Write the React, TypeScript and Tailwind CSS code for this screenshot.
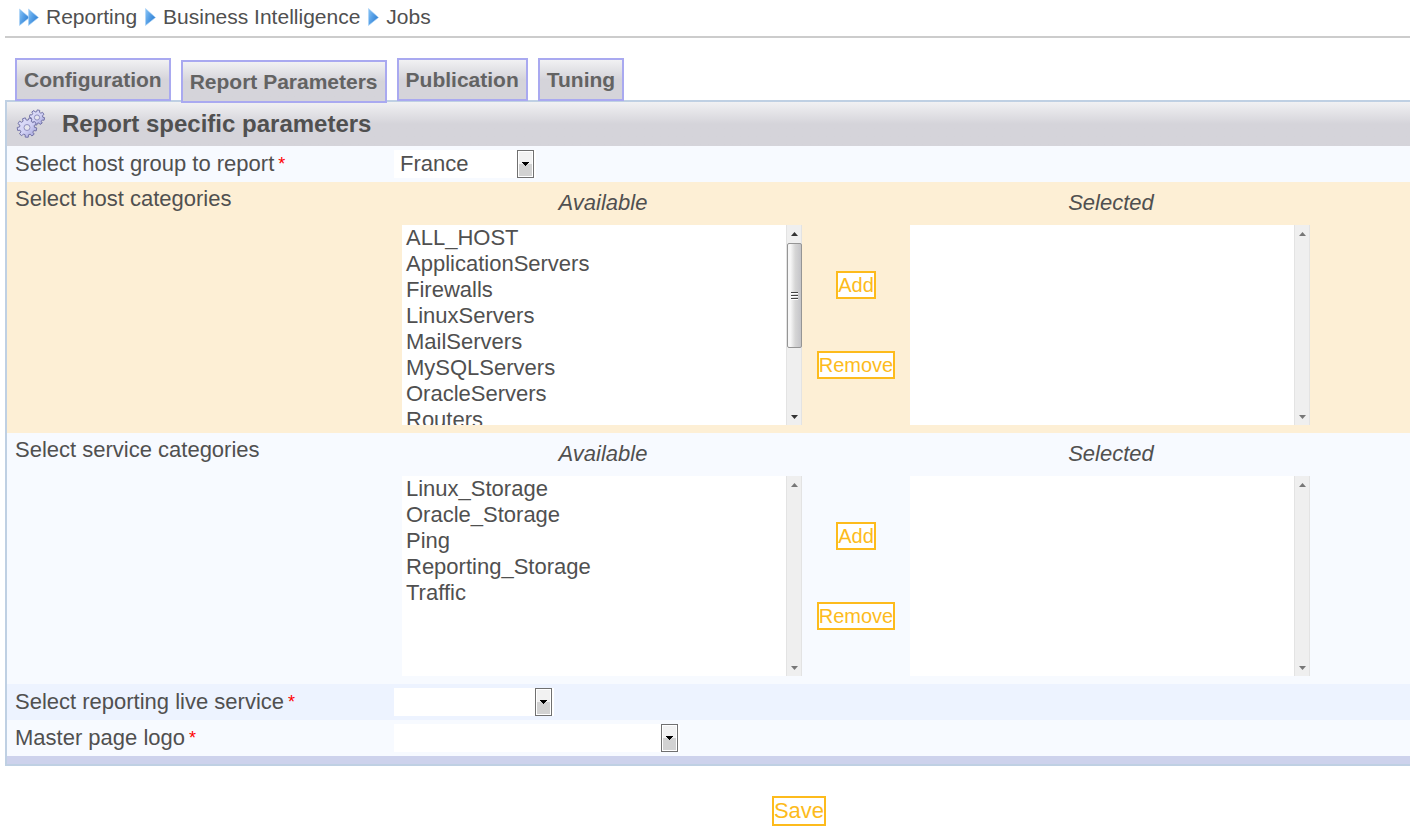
import type { ReactNode } from "react";
import { clsx } from "clsx";

const tabs = ["Configuration", "Report Parameters", "Publication", "Tuning"];
const activeTab = "Report Parameters";

const hostCategories = [
  "ALL_HOST",
  "ApplicationServers",
  "Firewalls",
  "LinuxServers",
  "MailServers",
  "MySQLServers",
  "OracleServers",
  "Routers",
  "Switches",
  "WebServers",
  "WindowsServers"
];

const serviceCategories = [
  "Linux_Storage",
  "Oracle_Storage",
  "Ping",
  "Reporting_Storage",
  "Traffic"
];

// Outline of a cog with flat-topped teeth
function gearPath(cx: number, cy: number, r: number, teeth: number) {
  const points: string[] = [];
  const step = (Math.PI * 2) / teeth;
  for (let i = 0; i < teeth; i++) {
    const a = i * step + 0.2;
    const corners = [
      [-0.32, 0.76],
      [-0.22, 1],
      [0.22, 1],
      [0.32, 0.76]
    ];
    for (const [offset, scale] of corners) {
      const x = cx + Math.cos(a + offset * step) * r * scale;
      const y = cy + Math.sin(a + offset * step) * r * scale;
      points.push(`${x.toFixed(2)} ${y.toFixed(2)}`);
    }
  }
  return `M${points.join("L")}Z`;
}

function GearsIcon() {
  return (
    <svg width="30" height="30" viewBox="0 0 30 30" aria-hidden="true">
      <defs>
        <linearGradient id="gear" x1="0" y1="0" x2="1" y2="1">
          <stop offset="0" stopColor="#e4e4fb" />
          <stop offset="0.55" stopColor="#d0d0f4" />
          <stop offset="1" stopColor="#9a9ad4" />
        </linearGradient>
      </defs>
      <g fill="url(#gear)" stroke="#7474a8" strokeLinejoin="round">
        <path d={gearPath(21, 8.5, 7.6, 8)} />
        <circle cx="21" cy="8.5" r="2.6" fill="#e6e6ee" stroke="#9090c0" />
        <path d={gearPath(11, 18.5, 9.8, 9)} />
        <circle cx="11" cy="18.5" r="3" fill="#e6e6ee" stroke="#9090c0" />
      </g>
    </svg>
  );
}

function Arrow({ double = false }: { double?: boolean }) {
  return (
    <svg
      width={double ? 20 : 12}
      height="18"
      viewBox={double ? "0 0 20 18" : "0 0 12 18"}
      aria-hidden="true"
    >
      <defs>
        <linearGradient id="arrow" x1="0" y1="0" x2="1" y2="0.6">
          <stop offset="0" stopColor="#8cc6f6" />
          <stop offset="0.5" stopColor="#559fe6" />
          <stop offset="1" stopColor="#2f7fd2" />
        </linearGradient>
      </defs>
      <g fill="url(#arrow)" stroke="#a9d2f6" strokeWidth="0.6">
        {double ? (
          <>
            <path d="M0.5 1L10.5 9.5L0.5 17.5Z" />
            <path d="M9.5 1L19.5 9.5L9.5 17.5Z" />
          </>
        ) : (
          <path d="M1.5 0.5L11.5 9.5L1.5 17.5Z" />
        )}
      </g>
    </svg>
  );
}

function Triangle({ up = false, muted = false }) {
  return (
    <svg width="7" height="4" viewBox="0 0 7 4" aria-hidden="true">
      <path
        d={up ? "M0 4L3.5 0L7 4Z" : "M0 0L7 0L3.5 4Z"}
        fill={muted ? "#777777" : "#333333"}
      />
    </svg>
  );
}

function Scrollbar({ thumb }: { thumb: boolean }) {
  return (
    <div
      className="flex w-4 shrink-0 flex-col items-center justify-between border-x border-[#e3e3e3] bg-[#efefef] pt-[7px] pb-1.5"
      aria-hidden="true"
    >
      <div className="flex w-full flex-col items-center gap-[7px]">
        <Triangle up muted={!thumb} />
        {thumb && (
          <div className="flex h-[105px] w-[15px] flex-col items-center justify-center gap-px rounded-xs border border-[#959595] bg-linear-to-r from-[#f6f6f6] from-20% via-[#d6d6d6] via-55% to-[#c4c4c8]">
            <span className="h-0.5 w-[7px] border-t border-[#444444] bg-white" />
            <span className="h-0.5 w-[7px] border-t border-[#444444] bg-white" />
            <span className="h-0.5 w-[7px] border-t border-[#444444] bg-white" />
          </div>
        )}
      </div>
      <Triangle muted={!thumb} />
    </div>
  );
}

function ListBox({
  id,
  title,
  options,
  thumb = false
}: {
  id: string;
  title: string;
  options: string[];
  thumb?: boolean;
}) {
  return (
    <div className="max-w-[400px] min-w-0 flex-1">
      <label
        htmlFor={id}
        className="block h-[43px] pl-0.5 text-center leading-[42px] italic"
      >
        {title}
      </label>
      <div className="flex h-[200px] bg-white">
        <select
          id={id}
          multiple
          className="h-full min-w-0 flex-1 appearance-none overflow-y-auto bg-white p-0 outline-none [scrollbar-width:none]"
        >
          {options.map(option => (
            <option
              key={option}
              className="h-[26px] min-h-0 px-1 py-0 leading-[26px]"
            >
              {option}
            </option>
          ))}
        </select>
        <Scrollbar thumb={thumb} />
      </div>
    </div>
  );
}

function Dropdown({
  id,
  className,
  options
}: {
  id: string;
  className: string;
  options: string[];
}) {
  return (
    <div className={clsx("relative h-7 bg-white", className)}>
      <select
        id={id}
        className="block h-7 w-full appearance-none bg-white py-0 pr-5 pl-1.5 leading-7 outline-none"
      >
        {options.map(option => (
          <option key={option}>{option}</option>
        ))}
      </select>
      <span className="pointer-events-none absolute inset-y-0 right-0.5 flex w-[17px] items-center justify-center border border-[#707070] bg-linear-to-b from-[#f2f2f2] from-50% to-[#d2d2d2] to-50% ring-1 ring-white ring-inset">
        <svg width="7" height="4" viewBox="0 0 7 4" aria-hidden="true">
          <path d="M0 0H7V1H0ZM1 1H6V2H1ZM2 2H5V3H2ZM3 3H4V4H3Z" fill="#000" />
        </svg>
      </span>
    </div>
  );
}

function ActionButton({
  children,
  className = "text-[20px]",
  type = "button"
}: {
  children: ReactNode;
  className?: string;
  type?: "button" | "submit";
}) {
  return (
    <button
      type={type}
      className={clsx(
        "border-2 border-[#fdbb1c] bg-white leading-6 text-[#fdbb1c]",
        className
      )}
    >
      {children}
    </button>
  );
}

function Row({
  id,
  label,
  className,
  children
}: {
  id: string;
  label: string;
  className: string;
  children: ReactNode;
}) {
  return (
    <div className={clsx("flex h-9 items-center", className)}>
      <label htmlFor={id} className="flex w-[387px] shrink-0 gap-1 pl-2">
        {label}
        <span className="text-lg leading-[26px] text-[#ff0000]">*</span>
      </label>
      {children}
    </div>
  );
}

function TransferRow({
  id,
  label,
  className,
  options,
  thumb
}: {
  id: string;
  label: string;
  className: string;
  options: string[];
  thumb?: boolean;
}) {
  return (
    <fieldset className={clsx("flex pb-2", className)} aria-label={label}>
      <div className="w-[395px] shrink-0 pt-1 pl-2">{label}</div>
      <ListBox
        id={`${id}-available`}
        title="Available"
        options={options}
        thumb={thumb}
      />
      <div className="flex w-[108px] shrink-0 flex-col items-center gap-[52px] pt-[89px]">
        <ActionButton>Add</ActionButton>
        <ActionButton>Remove</ActionButton>
      </div>
      <ListBox id={`${id}-selected`} title="Selected" options={[]} />
    </fieldset>
  );
}

export default function App() {
  return (
    <div className="bg-white pl-[5px] font-['Liberation_Sans',Arial,sans-serif] text-[22px] leading-[26px] text-[#505050]">
      <nav
        aria-label="Breadcrumb"
        className="flex h-[38px] items-center gap-[7px] border-b-2 border-[#cccccc] pb-0.5 pl-3.5 text-[21px]"
      >
        <Arrow double />
        <a href="#reporting">Reporting</a>
        <Arrow />
        <a href="#bi">Business Intelligence</a>
        <Arrow />
        <a href="#jobs">Jobs</a>
      </nav>

      <div className="flex gap-2.5 pt-5 pl-2.5">
        {tabs.map(tab => (
          <button
            key={tab}
            type="button"
            className={clsx(
              "z-10 h-[43px] border-2 border-[#a9a9f0] bg-linear-to-b from-[#f1f1f3] to-[#d5d4da] to-50% px-[7px] text-[21px] font-bold text-[#636363]",
              tab === activeTab ? "mt-0.5 -mb-[3px]" : "-mb-px"
            )}
          >
            {tab}
          </button>
        ))}
      </div>

      <form onSubmit={event => event.preventDefault()}>
        <div className="border-y-2 border-l-2 border-[#bfd0e3]">
          <div className="flex h-11 items-center gap-4 bg-linear-to-b from-[#f1f1f3] to-[#d5d4da] to-50% pl-[9px]">
            <GearsIcon />
            <h1 className="text-2xl font-bold">Report specific parameters</h1>
          </div>
          <Row
            id="host-group"
            label="Select host group to report"
            className="bg-[#f7faff]"
          >
            <Dropdown id="host-group" className="w-[142px]" options={["France"]} />
          </Row>
          <TransferRow
            id="host"
            label="Select host categories"
            className="bg-[#fdefd5]"
            options={hostCategories}
            thumb
          />
          <TransferRow
            id="service"
            label="Select service categories"
            className="bg-[#f7faff]"
            options={serviceCategories}
          />
          <Row
            id="live-service"
            label="Select reporting live service"
            className="bg-[#edf3ff]"
          >
            <Dropdown id="live-service" className="w-40" options={[""]} />
          </Row>
          <Row id="logo" label="Master page logo" className="bg-[#f7faff]">
            <Dropdown id="logo" className="w-[286px]" options={[""]} />
          </Row>
          <div className="h-2 bg-[#cdd2ec]" />
        </div>

        <div className="flex justify-center pt-[30px] pl-[183px]">
          <ActionButton type="submit" className="h-[30px]">
            Save
          </ActionButton>
        </div>
      </form>
    </div>
  );
}
